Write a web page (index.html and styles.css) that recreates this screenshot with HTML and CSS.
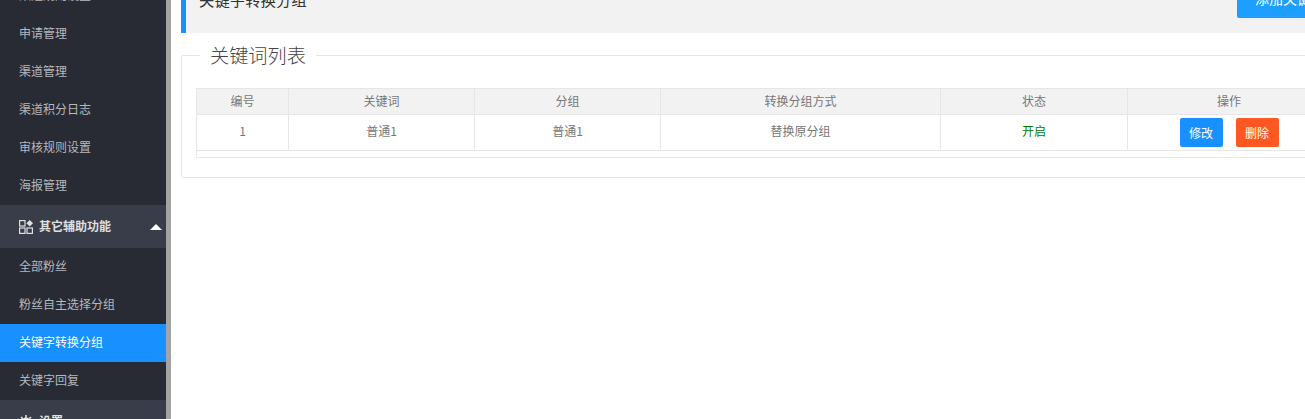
FILE: index.html
```html
<!DOCTYPE html>
<html lang="zh-CN">
<head>
<meta charset="utf-8">
<title>关键字转换分组</title>
<link rel="stylesheet" href="styles.css">
</head>
<body>
<div class="app">
  <aside class="sidebar">
    <a class="item">渠道规则设置</a>
    <a class="item">申请管理</a>
    <a class="item">渠道管理</a>
    <a class="item">渠道积分日志</a>
    <a class="item">审核规则设置</a>
    <a class="item">海报管理</a>
    <div class="group">
      <svg class="group-icon" viewBox="0 0 14 14" width="14" height="14" aria-hidden="true">
        <rect x="0.6" y="0.6" width="5.4" height="5.4" fill="none" stroke="currentColor" stroke-width="1.2"/>
        <rect x="0.6" y="8" width="5.4" height="5.4" fill="none" stroke="currentColor" stroke-width="1.2"/>
        <rect x="8" y="8" width="5.4" height="5.4" fill="none" stroke="currentColor" stroke-width="1.2"/>
        <path d="M10.7 0l3.3 3.3-3.3 3.3-3.3-3.3z" fill="currentColor"/>
      </svg>
      <span class="group-name">其它辅助功能</span>
      <i class="caret"></i>
    </div>
    <a class="item">全部粉丝</a>
    <a class="item">粉丝自主选择分组</a>
    <a class="item active">关键字转换分组</a>
    <a class="item">关键字回复</a>
    <div class="group">
      <svg class="group-icon" viewBox="0 0 14 14" width="14" height="14" aria-hidden="true">
        <circle cx="7" cy="7" r="3.6" fill="none" stroke="currentColor" stroke-width="2"/>
        <path d="M7 0v3M7 11v3M0 7h3M11 7h3M2 2l2 2M10 10l2 2M12 2l-2 2M4 10l-2 2" stroke="currentColor" stroke-width="1.6"/>
      </svg>
      <span class="group-name">设置</span>
    </div>
  </aside>
  <div class="strip"></div>
  <main class="content">
    <div class="quote">
      <span class="quote-title">关键字转换分组</span>
      <button class="btn add">添加关键字</button>
    </div>
    <fieldset class="panel">
      <legend>关键词列表</legend>
      <table class="grid">
        <colgroup>
          <col class="c-id"><col class="c-word"><col class="c-word"><col class="c-mode"><col class="c-state"><col class="c-op">
        </colgroup>
        <thead>
          <tr><th>编号</th><th>关键词</th><th>分组</th><th>转换分组方式</th><th>状态</th><th>操作</th></tr>
        </thead>
        <tbody>
          <tr>
            <td>1</td><td>普通1</td><td>普通1</td><td>替换原分组</td>
            <td class="on">开启</td>
            <td class="ops"><button class="btn small edit">修改</button><button class="btn small del">删除</button></td>
          </tr>
        </tbody>
      </table>
      <div class="grid-foot"></div>
    </fieldset>
  </main>
</div>
</body>
</html>
```
FILE: styles.css
```css
html, body { margin: 0; padding: 0; height: 100%; overflow: hidden; background: #fff; }
body { font-family: "Noto Sans CJK SC", "Liberation Sans", sans-serif; font-size: 12px; color: #777; }
.app { display: flex; width: 1343px; height: 460px; margin-top: -23px; }
.sidebar { width: 166px; flex: none; background: #282b33; overflow: hidden; }
.strip { width: 5px; flex: none; background: #a3a3a3; }
.item { display: block; height: 38px; line-height: 36px; padding-left: 19px; font-size: 12px; color: #b5b8be; }
.item.active { background: #1890ff; color: #fff; }
.group { display: flex; align-items: center; height: 43px; padding-left: 19px; background: #393d49; color: #e0e0e0; box-sizing: border-box; }
.group-icon { flex: none; margin-right: 6px; }
.group-name { font-size: 12px; font-weight: 700; flex: 1; line-height: 16px; padding-bottom: 2px; }
.caret { width: 0; height: 0; margin-right: 4px; border-left: 6px solid transparent; border-right: 6px solid transparent; border-bottom: 6px solid #fff; }
.content { flex: 1; padding-left: 10px; min-width: 0; }
.quote { display: flex; justify-content: space-between; height: 56px; box-sizing: border-box; background: #f2f2f2; border-left: 5px solid #1890ff; padding-left: 13px; }
.quote-title { font-size: 15.4px; line-height: 44px; color: #333; }
.btn { border: 0; border-radius: 2px; color: #fff; font: inherit; padding: 0; }
.add { height: 41px; padding: 0 18px; background: #1e9fff; font-size: 14px; }
.panel { margin: 8px 0 0; padding: 19px 14px 19px; border: 1px solid #e6e6e6; border-radius: 2px; min-width: 0; }
legend { margin-left: 4px; padding: 0 10px; font-size: 19.2px; line-height: 28px; font-weight: 300; color: #444; }
.grid { width: 1134px; border-collapse: collapse; table-layout: fixed; color: #777; }
.c-id { width: 92px; } .c-word { width: 186px; } .c-mode { width: 280px; } .c-state { width: 187px; } .c-op { width: 203px; }
th, td { border: 1px solid #e6e6e6; text-align: center; padding: 0; }
th { height: 23px; padding-bottom: 2px; background: #f2f2f2; font-weight: 400; }
td { height: 31px; padding-bottom: 4px; }
td.ops { height: 35px; padding-bottom: 0; }
td.on { color: #008000; }
.small { width: 43px; height: 29px; font-size: 12px; vertical-align: middle; }
.edit { background: #1890ff; margin-right: 13px; }
.del { background: #ff5722; }
.grid-foot { width: 1133px; height: 6px; border: 1px solid #e6e6e6; border-top: 0; }
```
